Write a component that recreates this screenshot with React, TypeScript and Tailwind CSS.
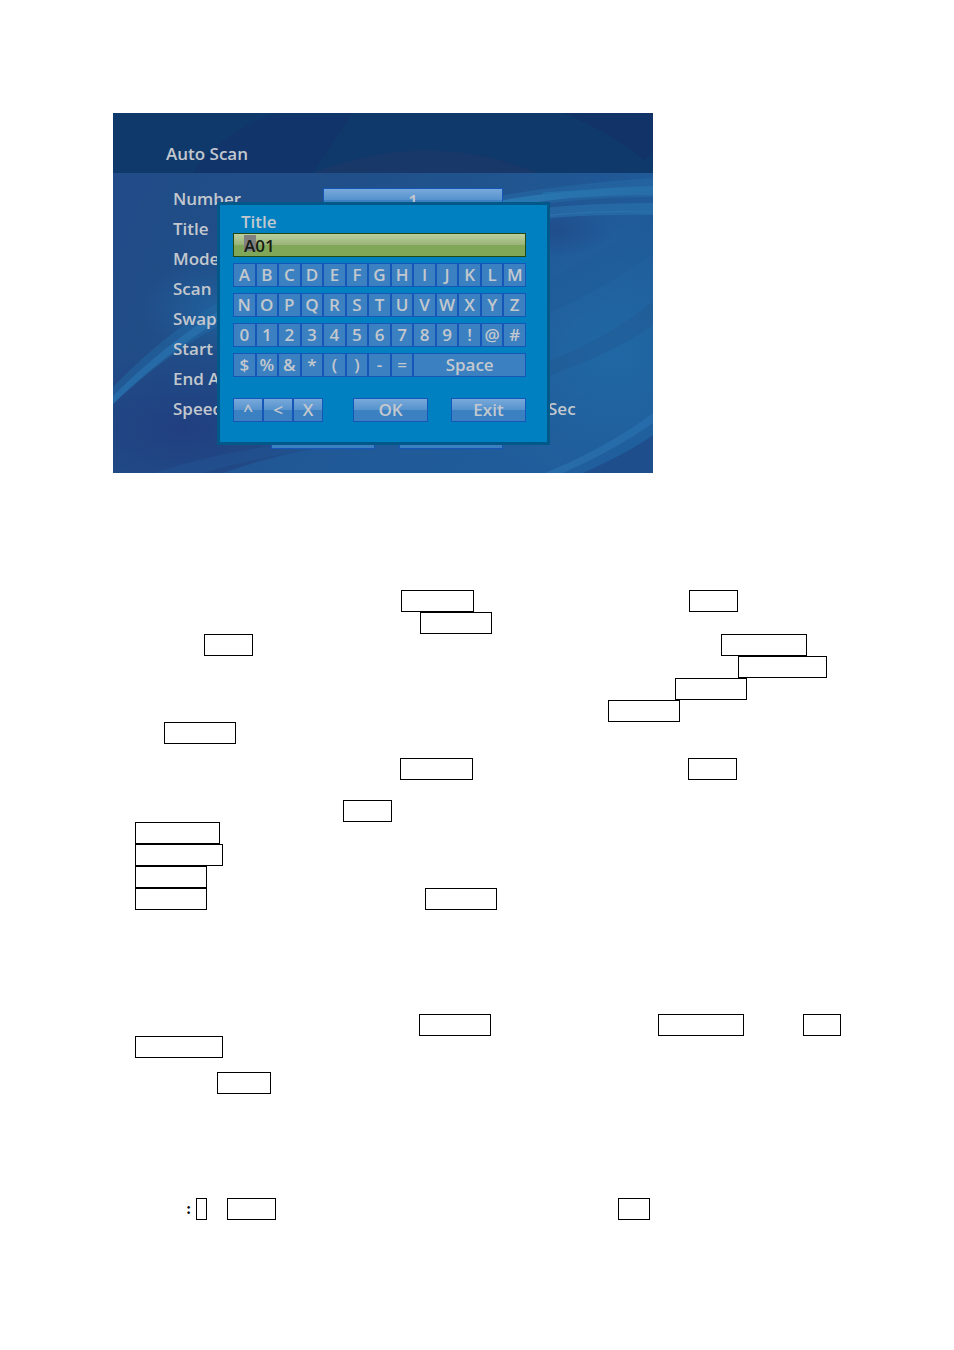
import { useState } from 'react';
import clsx from 'clsx';

const menuLabels = [
  'Title',
  'Mode',
  'Scan',
  'Swap',
  'Start A',
  'End A',
];

const keyRows = ['ABCDEFGHIJKLM', 'NOPQRSTUVWXYZ', '0123456789!@#', '$%&*()-='];

// each line of the page holds outlined boxes, spaced from the one before
const boxLines = [
  { line: '', boxes: ['ml-[266px] w-[73px]', 'ml-[215px] w-[49px]'] },
  { line: '', boxes: ['ml-[285px] w-[72px]'] },
  { line: '', boxes: ['ml-[69px] w-[49px]', 'ml-[468px] w-[86px]'] },
  { line: '', boxes: ['ml-[603px] w-[89px]'] },
  { line: '', boxes: ['ml-[540px] w-[72px]'] },
  { line: '', boxes: ['ml-[473px] w-[72px]'] },
  { line: '', boxes: ['ml-[29px] w-[72px]'] },
  { line: 'mt-[14px]', boxes: ['ml-[265px] w-[73px]', 'ml-[215px] w-[49px]'] },
  { line: 'mt-5', boxes: ['ml-[208px] w-[49px]'] },
  { line: '', boxes: ['w-[85px]'] },
  { line: '', boxes: ['w-[88px]'] },
  { line: '', boxes: ['w-[72px]'] },
  { line: '', boxes: ['w-[72px]', 'ml-[218px] w-[72px]'] },
  {
    line: 'mt-[104px]',
    boxes: ['ml-[284px] w-[72px]', 'ml-[167px] w-[86px]', 'ml-[59px] w-[38px]'],
  },
  { line: '', boxes: ['w-[88px]'] },
  { line: 'mt-[14px]', boxes: ['ml-[82px] w-[54px]'] },
];

const flatKey =
  'h-6 border border-[#1457b8] bg-[#3b80c1] leading-[22px] text-center';
const glossyKey =
  'h-6 border border-[#1457b8] bg-[linear-gradient(#78a9da,#5592cd_50%,#3b80c1_50%,#3b80c1)] leading-[22px] text-center';

function Backdrop() {
  return (
    <svg
      className="absolute inset-0 w-full h-full"
      viewBox="0 0 540 360"
      preserveAspectRatio="none"
      aria-hidden="true"
    >
      <defs>
        <linearGradient id="base" x1="0" y1="0" x2="1" y2="0.2">
          <stop offset="0" stopColor="#214b86" />
          <stop offset="0.5" stopColor="#205089" />
          <stop offset="1" stopColor="#205a98" />
        </linearGradient>
        <radialGradient id="indigo" cx="0.5" cy="0.5" r="0.5">
          <stop offset="0" stopColor="#213f80" />
          <stop offset="1" stopColor="#213f80" stopOpacity="0" />
        </radialGradient>
        <radialGradient id="glow" cx="0.5" cy="0.5" r="0.5">
          <stop offset="0" stopColor="#2068a5" />
          <stop offset="1" stopColor="#2068a5" stopOpacity="0" />
        </radialGradient>
        <linearGradient id="streak" x1="0" y1="0" x2="1" y2="0">
          <stop offset="0" stopColor="#2b83bc" />
          <stop offset="1" stopColor="#2b76b0" stopOpacity="0.8" />
        </linearGradient>
      </defs>
      <rect width="540" height="360" fill="url(#base)" />
      <ellipse cx="70" cy="315" rx="150" ry="80" fill="url(#indigo)" />
      <ellipse cx="105" cy="195" rx="75" ry="50" fill="url(#glow)" opacity="0.7" />
      <ellipse cx="500" cy="240" rx="170" ry="150" fill="url(#glow)" />
      <ellipse
        cx="440"
        cy="118"
        rx="60"
        ry="26"
        fill="url(#indigo)"
        opacity="0.45"
      />
      <path
        d="M0 274 Q50 222 107 188 V212 Q50 244 0 291Z"
        fill="#226aa6"
        opacity="0.5"
      />
      <path
        d="M0 283 Q50 233 107 197 V207 Q50 242 0 291Z"
        fill="#2a74b0"
        opacity="0.65"
      />
      <path
        d="M0 190 Q10 110 45 60 H0Z"
        fill="#235291"
        opacity="0.2"
      />
      <path
        d="M240 330 H540 V360 H110 Q170 338 240 330Z"
        fill="#215f9e"
        opacity="0.6"
      />
      <path
        d="M40 360 Q110 338 190 328 H260 Q150 342 90 360Z"
        fill="#235798"
        opacity="0.4"
      />
      {/* light streaks on the right */}
      <path
        d="M385 83 Q460 70 540 65 V84 Q460 84 385 98Z"
        fill="#256ca7"
        opacity="0.5"
      />
      <path
        d="M385 88 Q450 76 540 73 V82 Q460 81 385 95Z"
        fill="url(#streak)"
        opacity="0.7"
      />
      <path d="M430 80 Q480 76 540 77" stroke="#2472ad" fill="none" />
      <path
        d="M430 95 Q480 90 540 90 V102 Q480 101 430 106Z"
        fill="#2a73ae"
        opacity="0.6"
      />
      <path d="M430 103 Q480 97 540 99" stroke="#2e7cb6" fill="none" opacity="0.6" />
      <path
        d="M437 165 Q500 135 540 102 V140 Q500 170 437 200Z"
        fill="#1f5a96"
        opacity="0.3"
      />
      <path
        d="M437 248 Q500 222 540 188 V212 Q500 240 437 262Z"
        fill="#1f5a93"
        opacity="0.5"
      />
      <path d="M470 360 Q515 340 540 322 V360Z" fill="#1e4785" opacity="0.7" />
      <path
        d="M432 360 Q495 334 540 300 V310 Q500 338 450 360Z"
        fill="#296fab"
        opacity="0.85"
      />
      {/* title band */}
      <rect width="540" height="60" fill="#10396b" />
      <path d="M80 60 Q100 25 160 0 H240 L200 60Z" fill="#12336b" opacity="0.6" />
      <path d="M200 60 Q315 15 425 60Z" fill="#1b3767" opacity="0.7" />
      <path d="M450 0 Q500 20 530 47 L540 40 V0Z" fill="#123368" />
    </svg>
  );
}

function TitleDialog() {
  const [title, setTitle] = useState('A01');

  return (
    <div
      role="dialog"
      aria-label="Title"
      className="absolute left-[104px] top-[89px] w-[333px] border-3 border-[#025989] bg-[#0080c1] pl-[13px] pr-[21px] pt-[6px] pb-5"
    >
      <label htmlFor="title" className="block pl-2 leading-[22px]">
        Title
      </label>
      <div className="relative h-6 border border-[#24480f] bg-[linear-gradient(#bbd09f,#98b375_50%,#80a657_50%,#80a657)]">
        {/* block cursor under the first character */}
        <span className="absolute left-[10px] top-px w-3 h-4 bg-[#808080]" />
        <input
          id="title"
          type="text"
          value={title}
          onChange={(e) => setTitle(e.target.value)}
          className="relative block w-full h-full pl-[10px] leading-[22px] text-[#161c14] outline-none"
        />
      </div>

      <div className="grid gap-1.5 mt-1.5">
        {keyRows.map((row) => (
          <div key={row} className="grid grid-cols-13">
            {row.split('').map((char) => (
              <button
                key={char}
                type="button"
                onClick={() => setTitle(title + char)}
                className={flatKey}
              >
                {char}
              </button>
            ))}
            {row.length < 13 && (
              <button
                type="button"
                onClick={() => setTitle(title + ' ')}
                className={clsx(flatKey, 'col-span-5')}
              >
                Space
              </button>
            )}
          </div>
        ))}
      </div>

      <div className="flex justify-between mt-[21px]">
        <div className="flex">
          {['^', '<', 'X'].map((char) => (
            <button key={char} type="button" className={clsx(glossyKey, 'w-[30px]')}>
              {char}
            </button>
          ))}
        </div>
        <button type="button" className={clsx(glossyKey, 'w-[75px] ml-[7px]')}>
          OK
        </button>
        <button type="button" className={clsx(glossyKey, 'w-[75px]')}>
          Exit
        </button>
      </div>
    </div>
  );
}

export default function App() {
  return (
    <main className="min-h-screen bg-white pt-[113px] pb-32">
      {/* device screen */}
      <section className="relative ml-[113px] w-[540px] h-[360px] overflow-hidden font-['Open_Sans',sans-serif] font-semibold text-[17px] text-[#c3c8ce]">
        <Backdrop />
        <div className="relative">
          <h1 className="h-[60px] pl-[53px] pt-[30px] leading-[22px]">
            Auto Scan
          </h1>
          <div className="pt-[11px] pl-[60px] leading-[30px]">
            <div className="flex items-center h-[30px]">
              <label htmlFor="number" className="w-[150px]">
                Number
              </label>
              <input
                id="number"
                type="text"
                defaultValue="1"
                className={clsx(glossyKey, 'w-[180px] mt-0.5')}
              />
            </div>
            {menuLabels.map((label) => (
              <p key={label}>{label}</p>
            ))}
            <p className="flex">
              <span className="w-[375px]">Speed</span>
              <span>Sec</span>
            </p>
          </div>
          <div className="flex gap-6 pl-[158px] pt-px">
            <button
              type="button"
              aria-label="Start"
              className={clsx(glossyKey, 'w-[104px]')}
            />
            <button
              type="button"
              aria-label="Exit"
              className={clsx(glossyKey, 'w-[104px]')}
            />
          </div>
        </div>
        <TitleDialog />
      </section>

      {/* outlined boxes */}
      <section className="mt-[117px] pl-[135px]">
        {boxLines.map(({ line, boxes }, i) => (
          <div key={i} className={clsx('flex h-[22px]', line)}>
            {boxes.map((box) => (
              <span
                key={box}
                className={clsx('shrink-0 border border-black', box)}
              />
            ))}
          </div>
        ))}
        <div className="flex h-[22px] mt-[104px] font-['Liberation_Serif',serif] font-bold text-[16px] leading-[22px]">
          <span className="ml-[51px] w-[10px]">:</span>
          <span className="w-[11px] border border-black" />
          <span className="ml-5 w-[49px] border border-black" />
          <span className="ml-[342px] w-8 border border-black" />
        </div>
      </section>
    </main>
  );
}
